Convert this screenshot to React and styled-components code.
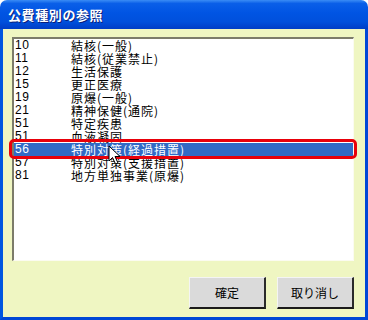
import styled, { createGlobalStyle } from 'styled-components';

const GlobalStyle = createGlobalStyle`
  html, body {
    margin: 0;
    padding: 0;
    background: #fff;
  }
  #root {
    width: 368px;
    height: 320px;
  }
`;

const FONT = `"Noto Sans CJK JP", "Liberation Sans", sans-serif`;

const Window = styled.div`
  width: 368px;
  height: 320px;
  display: flex;
  flex-direction: column;
  font-family: ${FONT};
  box-sizing: border-box;
`;

const TitleBar = styled.div`
  height: 29px;
  flex-shrink: 0;
  display: flex;
  align-items: center;
  padding-left: 8px;
  border-radius: 7px 7px 0 0;
  background: linear-gradient(
    to bottom,
    #3a8cf5 0%,
    #0a5fe8 12%,
    #0054e3 45%,
    #0050dc 75%,
    #003dc6 100%
  );
`;

const Title = styled.span`
  color: #fff;
  font-size: 13px;
  font-weight: 700;
  letter-spacing: 0.6px;
  text-shadow: 1px 1px 0 #0a1f7a;
`;

const Body = styled.div`
  flex: 1;
  display: flex;
  flex-direction: column;
  background: #eff6c2;
  border: 3px solid #0047d6;
  border-top: none;
  border-left-color: #0056e0;
  padding: 8px 11px 7px 9px;
`;

const ListBox = styled.div`
  position: relative;
  height: 224px;
  box-sizing: border-box;
  background: #fff;
  border-top: 2px solid #7c7c6a;
  border-left: 2px solid #7c7c6a;
  border-right: 1px solid #fbfbf0;
  border-bottom: 1px solid #fbfbf0;
`;

const Row = styled.div`
  display: flex;
  height: 13px;
  line-height: 13px;
  font-size: 12px;
  color: ${(p) => (p.$selected ? '#fff' : '#000')};
  background: ${(p) => (p.$selected ? '#316ac5' : 'transparent')};
  white-space: nowrap;
`;

const Code = styled.span`
  width: 56px;
  padding-left: 1px;
  font-family: "Liberation Sans", sans-serif;
  letter-spacing: 0.5px;
`;

const Name = styled.span`
  letter-spacing: 1px;
`;

const Highlight = styled.div`
  position: absolute;
  left: -5px;
  right: -4px;
  top: 100px;
  height: 20px;
  box-sizing: border-box;
  border: 3px solid #e8000a;
  border-radius: 5px;
  pointer-events: none;
`;

const Cursor = styled.svg`
  position: absolute;
  left: 94px;
  top: 106px;
`;

const ButtonRow = styled.div`
  display: flex;
  justify-content: flex-end;
  gap: 11px;
  margin-top: 16px;
`;

const Button = styled.button`
  width: 77px;
  height: 32px;
  box-sizing: border-box;
  background: #dadada;
  border-top: 1px solid #f4f4f4;
  border-left: 1px solid #f4f4f4;
  border-right: 2px solid #2a2a2a;
  border-bottom: 2px solid #1a1a1a;
  font-family: ${FONT};
  font-size: 12px;
  color: #000;
  padding: 0;
`;

const items = [
  ['10', '結核(一般)'],
  ['11', '結核(従業禁止)'],
  ['12', '生活保護'],
  ['15', '更正医療'],
  ['19', '原爆(一般)'],
  ['21', '精神保健(通院)'],
  ['51', '特定疾患'],
  ['51', '血液凝固'],
  ['56', '特別対策(経過措置)'],
  ['57', '特別対策(支援措置)'],
  ['81', '地方単独事業(原爆)'],
];

export default function App() {
  return (
    <>
      <GlobalStyle />
      <Window>
        <TitleBar>
          <Title>公費種別の参照</Title>
        </TitleBar>
        <Body>
          <ListBox>
            {items.map(([code, name], i) => (
              <Row key={i} $selected={i === 8}>
                <Code>{code}</Code>
                <Name>{name}</Name>
              </Row>
            ))}
            <Highlight />
            <Cursor width="14" height="20" viewBox="0 0 14 20">
              <path
                d="M1 1 L1 16 L4.5 12.5 L7.5 19 L10 18 L7 11.5 L12 11.5 Z"
                fill="#fff"
                stroke="#000"
                strokeWidth="1"
                strokeLinejoin="miter"
              />
            </Cursor>
          </ListBox>
          <ButtonRow>
            <Button>確定</Button>
            <Button>取り消し</Button>
          </ButtonRow>
        </Body>
      </Window>
    </>
  );
}
